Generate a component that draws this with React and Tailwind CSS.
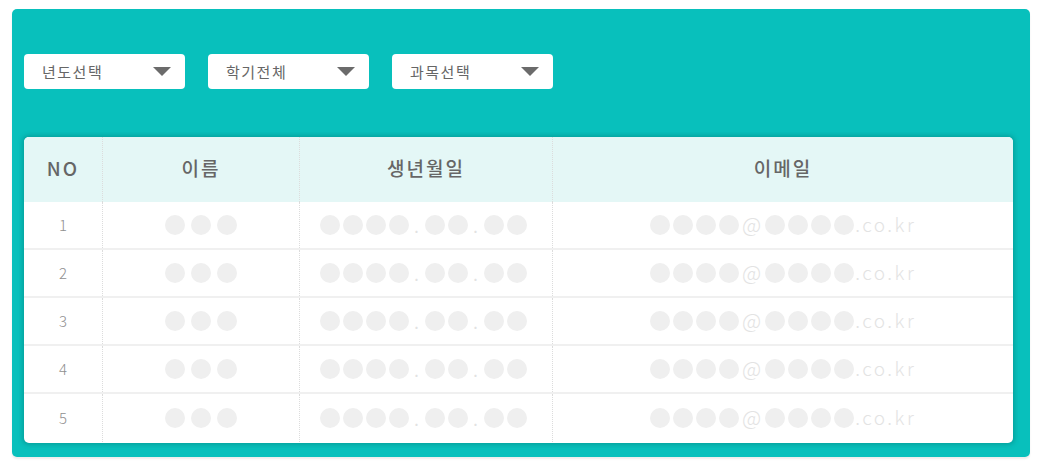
import React from "react";

const font = { fontFamily: '"Noto Sans CJK KR", "Noto Sans", sans-serif' };

function Dot() {
  return <span className="inline-block w-[20px] h-[20px] rounded-full bg-[#efefef]" />;
}

function Dots({ n }) {
  return (
    <span className="flex gap-[3px]">
      {Array.from({ length: n }).map((_, i) => (
        <Dot key={i} />
      ))}
    </span>
  );
}

function Period() {
  return (
    <span className="w-[16px] h-[20px] flex items-end justify-center text-[16px] text-[#e2e2e2] leading-none pb-[1px]">.</span>
  );
}

function Select({ label }) {
  return (
    <div className="w-[161px] h-[35px] bg-white rounded-[4px] flex items-center justify-between pl-[18px] pr-[14px]">
      <span className="text-[15px] tracking-[1.5px] text-[#666] leading-none">{label}</span>
      <svg width="18" height="10" viewBox="0 0 18 10">
        <polygon points="0,0 18,0 9,9" fill="#6b6b6b" />
      </svg>
    </div>
  );
}

const cols = "grid grid-cols-[79px_197px_253px_1fr]";
const sep = "border-r border-dotted border-[#dcdcdc]";

function Row({ n, last }) {
  return (
    <div className={`${cols} h-[48px] ${last ? "" : "border-b-2 border-[#f0f0f0]"}`}>
      <div className={`${sep} flex items-center justify-center text-[15px] text-[#8f8f8f] font-light`}>{n}</div>
      <div className={`${sep} flex items-center justify-center`}>
        <span className="flex gap-[6px]">
          <Dot />
          <Dot />
          <Dot />
        </span>
      </div>
      <div className={`${sep} flex items-center justify-center pr-[6px]`}>
        <Dots n={4} />
        <Period />
        <Dots n={2} />
        <Period />
        <Dots n={2} />
      </div>
      <div className="flex items-center pl-[97px]">
        <Dots n={4} />
        <span className="text-[21px] text-[#e3e3e3] leading-[20px] h-[20px] ml-[3px] mr-[4px] font-light -mt-[3px]">@</span>
        <Dots n={4} />
        <span className="text-[19px] text-[#e3e3e3] leading-[20px] h-[20px] ml-[1px] tracking-[2.5px] font-light -mt-[3px]">.co.kr</span>
      </div>
    </div>
  );
}

export default function App() {
  return (
    <div className="w-[1042px] h-[469px] bg-white pt-[9px] pl-[12px]" style={font}>
      <div className="w-[1018px] h-[448px] bg-[#08c0bc] rounded-[5px] pt-[45px] pl-[12px] pr-[17px] shadow-[0_2px_2px_rgba(0,0,0,0.08)]">
        <div className="flex gap-[23px]">
          <Select label="년도선택" />
          <Select label="학기전체" />
          <Select label="과목선택" />
        </div>
        <div className="mt-[48px] h-[306px] bg-white rounded-[5px] overflow-hidden shadow-[0_0_4px_2px_rgba(0,110,105,0.35)]">
          <div className={`${cols} h-[65px] bg-[#e4f7f6] text-[#666] text-[19px] tracking-[2px] font-medium`}>
            <div className={`${sep} flex items-center justify-center pb-[2px]`}>NO</div>
            <div className={`${sep} flex items-center justify-center pb-[2px]`}>이름</div>
            <div className={`${sep} flex items-center justify-center pb-[2px]`}>생년월일</div>
            <div className="flex items-center justify-center pb-[2px]">이메일</div>
          </div>
          {[1, 2, 3, 4, 5].map((n) => (
            <Row key={n} n={n} last={n === 5} />
          ))}
        </div>
      </div>
    </div>
  );
}
